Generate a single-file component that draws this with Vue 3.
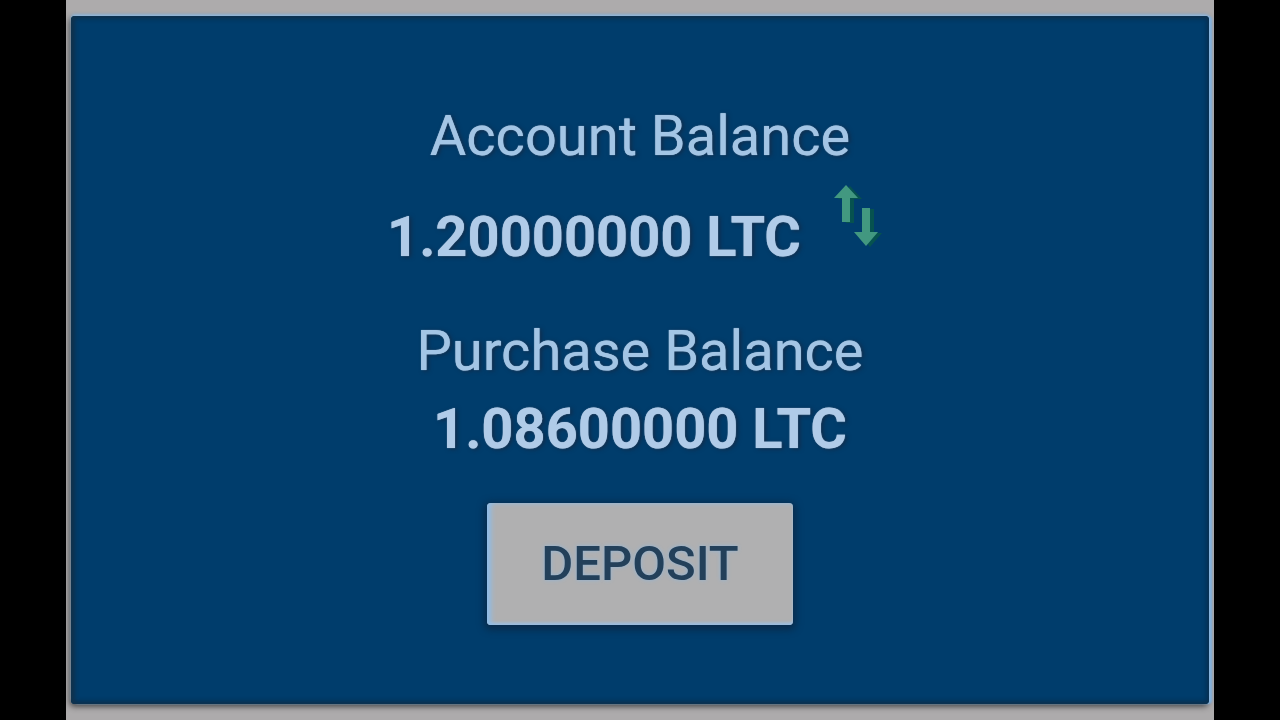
<script setup>
const account = '1.20000000 LTC'
const purchase = '1.08600000 LTC'
</script>

<template>
  <main class="stage">
    <div class="surface">
      <section class="card">
        <h2 class="label">Account Balance</h2>
        <div class="amount-row">
          <strong class="amount">{{ account }}</strong>
          <svg class="swap" viewBox="0 0 62 66" aria-hidden="true">
            <g class="swap-shade" transform="translate(4 1)">
              <path d="M15 1 27 14H19V38H11V14H3Z" />
              <path d="M31 24H39V48H47L35 62 23 48H31Z" />
            </g>
            <path d="M15 1 27 14H19V38H11V14H3Z" />
            <path d="M31 24H39V48H47L35 62 23 48H31Z" />
          </svg>
        </div>
        <h2 class="label purchase">Purchase Balance</h2>
        <strong class="amount">{{ purchase }}</strong>
        <button class="deposit" type="button">DEPOSIT</button>
      </section>
    </div>
  </main>
</template>

<style>
body {
  margin: 0;
  background: #000;
}
</style>

<style scoped>
.stage {
  box-sizing: border-box;
  display: flex;
  min-height: 100vh;
  padding: 0 66px;
  background: #000;
  font-family: Roboto, "Liberation Sans", sans-serif;
}

.surface {
  box-sizing: border-box;
  display: flex;
  flex: 1;
  padding: 16px 5px;
  overflow: hidden;
  background: #adabac;
}

.card {
  box-sizing: border-box;
  display: flex;
  flex: 1;
  flex-direction: column;
  align-items: center;
  padding: 81px 24px 78px;
  border-radius: 4px;
  background: #003d6c;
  box-shadow:
    0 -2px 3px #92b8dc,
    3px 0 2px #82b2df,
    -1px 2px 6px #333,
    inset 2px 0 5px 1px #12334c,
    inset 0 0 5px 2px #062d50;
}

.label,
.amount {
  margin: 0;
  color: #a3c5e5;
  font-size: 56px;
  line-height: 78px;
  text-shadow: 0 0 1px #a3c5e5, 2px 1px 4px #122b48;
}

.label {
  font-weight: 400;
}

.amount {
  color: #b0cbe8;
  font-weight: 700;
}

.amount-row {
  display: flex;
  align-items: flex-start;
  gap: 30px;
  margin-top: 23px;
}

.swap {
  width: 62px;
  height: 66px;
  margin-top: -14px;
  fill: #429880;
}

.swap-shade {
  fill: #06524f;
}

.purchase {
  margin-top: 36px;
}

.deposit {
  min-width: 306px;
  height: 122px;
  margin-top: 35px;
  padding: 0 48px;
  border: 0;
  border-radius: 4px;
  background: #b0b0b1;
  box-shadow:
    0 2px 7px 3px #082c4d,
    inset 4px 0 5px #8fbde8,
    inset 0 -2px 3px #a3c0de;
  color: #23405a;
  font-family: inherit;
  font-size: 49px;
  font-weight: 500;
  line-height: 56px;
  text-shadow: 0 0 4px #91b5d7;
}
</style>
